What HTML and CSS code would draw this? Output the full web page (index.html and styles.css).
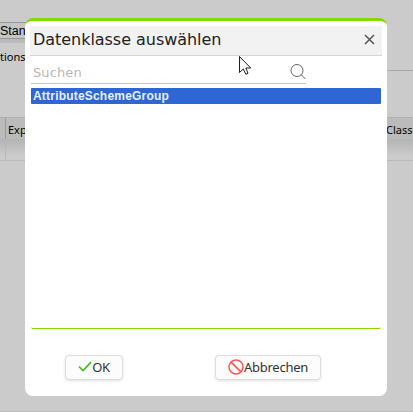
FILE: index.html
```
<!DOCTYPE html>
<html lang="de">
<head>
<meta charset="utf-8">
<title>Datenklasse auswählen</title>
<link rel="stylesheet" href="styles.css">
</head>
<body>
<div class="page">
  <div class="toolbar"><span class="select">Stan</span></div>
  <div class="tabs"><span>tions</span></div>
  <div class="spacer"></div>
  <div class="table-head"><span class="col-first">Exp</span><span class="col-last">Class</span></div>
  <div class="table-row"></div>
  <div class="rest"></div>
</div>
<section class="dialog" role="dialog">
  <header class="title-bar">
    <h1><span class="title-text">Datenklasse auswählen</span></h1>
    <svg class="close" width="11" height="11" viewBox="0 0 11 11"><path d="M1 1L10 10M10 1L1 10"/></svg>
  </header>
  <div class="search">
    <span class="placeholder">Suchen</span>
    <svg width="16" height="17" viewBox="0 0 16 17"><circle cx="7" cy="7.5" r="6"/><path d="M11.3 11.8L15.6 16.1"/></svg>
  </div>
  <div class="list"><div class="option"><span class="option-text">AttributeSchemeGroup</span></div></div>
  <footer class="actions">
    <button class="btn ok"><svg width="14" height="12" viewBox="0 0 14 12"><path d="M1 5.5L5 9.5L13 1.2"/></svg><span>OK</span></button>
    <button class="btn cancel"><svg width="16" height="16" viewBox="0 0 16 16"><circle cx="8" cy="8" r="7"/><path d="M3.1 3.1L12.9 12.9"/></svg><span>Abbrechen</span></button>
  </footer>
</section>
<svg class="cursor" width="13" height="20" viewBox="0 0 13 20"><path d="M.5 .5V16.5L4.3 13L6.8 18.3L9 17.3L6.8 12H11.7Z"/></svg>
</body>
</html>
```
FILE: styles.css
```
* { box-sizing: border-box; }
body {
  margin: 0;
  width: 413px;
  height: 412px;
  overflow: hidden;
  position: relative;
  font-family: "DejaVu Sans", sans-serif;
  color: #222;
}
.page {
  display: flex;
  flex-direction: column;
  height: 412px;
  background: #cbcbcb;
  font: 11px "Noto Sans", sans-serif;
  color: #000;
  border-bottom: 1px solid #bcbcbc;
}
.toolbar { width: 60px; height: 43px; padding-top: 22px; border-bottom: 4px solid #bababa; }
.select {
  display: block;
  width: 60px;
  height: 17px;
  border: 1px solid #999;
  border-left: 0;
  background: #c5c5c5;
  font: 12.5px/16px "Liberation Sans", sans-serif;
}
.tabs { height: 28px; line-height: 28px; border-bottom: 1px solid #a9a9a9; margin-left: 60px; text-indent: -60px; }
.spacer { height: 46px; }
.table-head {
  display: flex;
  justify-content: space-between;
  height: 22px;
  line-height: 24px;
  border-top: 1px solid #b0b0b0;
  background: #bbb;
}
.col-first { border-left: 1px solid #999; margin-left: 5px; padding-left: 2px; }
.col-last { width: 27px; white-space: nowrap; }
.table-row {
  height: 22px;
  border-bottom: 1px solid #b9b9b9;
  background: linear-gradient(90deg, transparent 5px, #b9b9b9 5px, #b9b9b9 6px, transparent 6px), linear-gradient(#b4b4b4, #cbcbcb 80%);
}
.rest { flex: 1; }
.dialog {
  position: absolute;
  left: 25px;
  top: 18px;
  width: 362px;
  height: 378px;
  padding: 5px 5px 0;
  border-top: 3px solid #83d900;
  border-radius: 8px;
  background: #fff;
}
.title-bar {
  display: flex;
  align-items: center;
  justify-content: space-between;
  height: 30px;
  padding: 0 7px 2px 3px;
  border-bottom: 1px solid #d5d5d5;
  background: #f2f2f2;
}
h1 { margin: 0; font-size: 16px; font-weight: 400; line-height: 20px; letter-spacing: -.04px; }
.close { fill: none; stroke: #555; stroke-width: 1.5; }
.search {
  display: flex;
  align-items: center;
  justify-content: space-between;
  width: 275px;
  height: 28px;
  margin-left: 1px;
  padding: 3px 0 0 2px;
  border-bottom: 1px solid #c5c5c5;
  font-size: 13px;
  color: #b8b8b8;
}
.placeholder { position: relative; top: 1px; letter-spacing: .1px; }
.search svg { fill: none; stroke: #666; stroke-width: 1; }
.list {
  height: 241px;
  margin: 4px 1px 0;
  border-bottom: 1px solid #83d900;
  border-radius: 2px;
}
.option {
  height: 16px;
  padding-left: 2px;
  border-radius: 1px;
  background: #2e67d3;
  color: #e8effb;
  font: bold 12px/16px "Liberation Sans", sans-serif;
  letter-spacing: .2px;
}
.actions { display: flex; gap: 92px; margin: 26px 0 0 35px; }
.btn {
  display: flex;
  align-items: center;
  justify-content: center;
  height: 25px;
  padding: 0;
  border: 1px solid #ddd;
  border-radius: 4px;
  background: #fcfcfc;
  box-shadow: 0 1px 3px rgba(0, 0, 0, .12);
  font: 13px "Noto Sans", sans-serif;
  letter-spacing: -.25px;
  color: #333;
}
.btn span { position: relative; top: -1px; }
.ok { width: 58px; }
.cancel { width: 106px; }
.btn svg { position: relative; top: -1px; fill: none; }
.ok svg { stroke: #44bd20; stroke-width: 1.7; }
.cancel svg { stroke: #ff5252; stroke-width: 1.5; }
.cursor { position: absolute; left: 239px; top: 56px; fill: #fff; stroke: #1b1b2b; stroke-width: 1; }
```
